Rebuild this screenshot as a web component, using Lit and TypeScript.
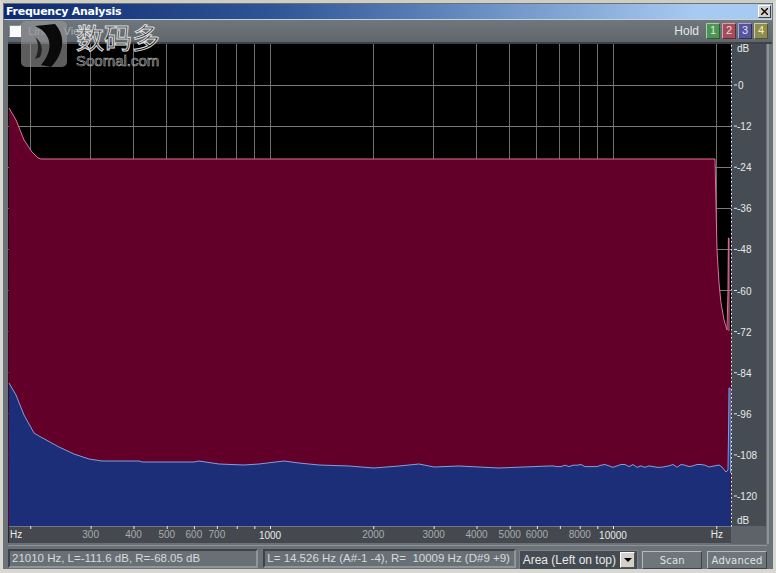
import { LitElement, html, css, svg } from "lit";
import { customElement } from "lit/decorators.js";

const PW = 723;
const PH = 482;
const fx = (f: number) => 262 + 343 * Math.log10(f / 1000);
const dy = (db: number) => 41 - (db * 41.1) / 12;
const majors = [200, 300, 400, 500, 600, 700, 800, 900, 1000, 2000, 3000, 4000, 5000, 6000, 7000, 8000, 9000, 10000, 20000];
const labels: [number, number][] = [300, 400, 500, 600, 700, 2000, 3000, 4000, 5000, 6000, 8000].map((f) => [f, fx(f)]);
const dbs = [0, -12, -24, -36, -48, -60, -72, -84, -96, -108, -120];

const red: [number, number][] = [
  [0, 526], [1, 108], [8, 120], [16, 140], [24, 152], [30, 158], [33, 159], [707, 159], [708, 205], [709, 250], [711, 283], [713, 303], [716, 320], [719, 330],
  [720, 290], [720.4, 238], [721, 238], [721, 331], [723, 331], [723, 526],
].map(([x, y]) => [x, y - 44]);

const bluePts: [number, number][] = [
  [1, 383], [8, 395], [16, 415], [26, 433], [31, 436], [51, 447], [66, 454], [81, 459], [94, 461], [131, 461], [134, 462], [186, 462], [191, 461], [211, 464],
  [236, 465], [251, 464], [276, 461], [291, 463], [311, 465], [341, 466], [366, 468], [391, 466], [411, 464], [426, 467], [451, 466], [491, 468], [541, 466],
];
function blueLine(): [number, number][] {
  const pts = [...bluePts];
  let seed = 7;
  for (let x = 545; x < 700; x += 4) {
    seed = (seed * 73 + 41) % 101;
    pts.push([x, 465.5 + (seed % 5) * 0.7 - 1]);
  }
  pts.push([701, 467], [711, 465], [714, 467], [718, 472], [720, 470], [720.6, 428], [721, 388], [722, 388], [722.5, 473]);
  return pts.map(([x, y]) => [x, y - 44]);
}
const str = (p: [number, number][]) => p.map(([x, y]) => `${x},${y}`).join(" ");

@customElement("app-root")
export class AppRoot extends LitElement {
  static styles = css`
    :host { display: block; width: 776px; height: 573px; font-family: "Liberation Sans", Arial, sans-serif; }
    .frame {
      position: relative; box-sizing: border-box; width: 776px; height: 573px; overflow: hidden;
      background: #6a7277; padding: 3px 4px 5px 4px; display: flex; flex-direction: column;
      border: solid #d9d8d0; border-width: 3px 3px 4px 3px; border-top-color: #cfcec4;
      padding: 1px 1px 1px 1px;
    }
    .title {
      height: 15px; flex: none; display: flex; align-items: center; justify-content: space-between; padding: 0 1px 0 2px;
      background: linear-gradient(90deg, #0d2a70, #2f5596 35%, #a6caf0 90%);
      border-bottom: 1px solid #c7d3dc;
      color: #fff; font: bold 11px "DejaVu Sans", sans-serif; letter-spacing: -0.25px;
    }
    .close {
      width: 11px; height: 11px; background: #d4d0c8; border: 1px solid; border-color: #fff #404040 #404040 #fff; margin-right: 0;
      display: grid; place-items: center;
    }
    .close svg { display: block; }
    .body { flex: 1; display: flex; flex-direction: column; background: #6a7277; padding-left: 4px; }
    .tools {
      height: 24px; flex: none; display: flex; align-items: center; justify-content: space-between;
      padding: 0 4px 1px 1px; box-sizing: border-box;
      background: linear-gradient(#6f777c, #5f666c); border-bottom: 2px solid #3e4246;
      font-size: 11.5px; color: #aab0b4;
    }
    .check { display: flex; align-items: center; gap: 7px; }
    .box { width: 10px; height: 10px; background: #fbfbfb; border: 1px solid; border-color: #8a8f92 #fff #fff #8a8f92; }
    .hold { display: flex; align-items: center; gap: 2px; color: #e4e6e6; font-size: 12px; }
    .hold span { margin-right: 5px; }
    .hb {
      width: 12px; height: 14px; border: 1px solid; font-size: 11px; display: grid; place-items: center; color: #eef; line-height: 1;
    }
    .g { background: #4d9455; border-color: #a4cfa4 #2c5c32 #2c5c32 #a4cfa4; color: #d4f4c4; }
    .r { background: #a04f5b; border-color: #dca0a6 #602a32 #602a32 #dca0a6; color: #f0d8d8; }
    .b { background: #55559c; border-color: #a8a8d8 #2f2f60 #2f2f60 #a8a8d8; color: #e0e0ff; }
    .y { background: #8d8d52; border-color: #d0d0a0 #55552c #55552c #d0d0a0; color: #f4f0b0; }
    .main { display: flex; flex: none; height: 482px; }
    .plot { display: block; flex: none; background: #000; }
    .dbaxis { display: block; flex: none; background: #454c54; }
    .rail { width: 2px; margin-left: 1px; background: #8d9397; flex: none; height: 500px; }
    .hz { display: block; flex: none; }
    .hz-row { display: flex; flex: none; height: 17px; }
    .axt { font: 10px "Liberation Sans", sans-serif; fill: #e8eaea; }
    .dim { fill: #a8acac; }
    .status {
      flex: none; display: flex; align-items: flex-start; height: 22px; margin-top: 1px; border-top: 1px solid #8d9397; margin-right: 5px; padding-top: 3px; gap: 5px;
      font-size: 11.5px; color: #d6dadc;
    }
    .cell {
      box-sizing: border-box; height: 19px; border: 2px solid; border-color: #3c4248 #8f9599 #8f9599 #3c4248;
      padding: 0 2px 0 2px; line-height: 15px; white-space: pre; background: #687076; overflow: hidden;
    }
    .c1 { width: 251px; }
    .c2 { width: 253px; }
    .combo {
      box-sizing: border-box; width: 120px; height: 20px; margin-left: -2px; margin-top: 1px; background: #454b52; color: #e8e8e8; border: 1px solid #7c8287;
      display: flex; align-items: center; justify-content: space-between; padding: 0 2px 0 3px; font-size: 12px;
    }
    .arrow {
      width: 15px; height: 16px; box-sizing: border-box; background: #d4d0c8; border: 1px solid; border-color: #fff #555 #555 #fff; display: grid; place-items: center;
    }
    .arrow i { width: 0; height: 0; border: 4px solid transparent; border-top: 4px solid #000; border-bottom: 0; }
    .btn {
      box-sizing: border-box; width: 60px; height: 18px; margin-top: 2px; border: 1px solid; border-color: #b5babd #3d4348 #3d4348 #b5babd; background: #6e767b;
      color: #dfe2e2; font: 10px "DejaVu Sans", sans-serif; display: grid; place-items: center; letter-spacing: 0.2px;
    }
    .btn.first { margin-left: -1px; margin-right: 0; }
    .wm { position: absolute; left: 18px; top: 17px; width: 150px; height: 55px; pointer-events: none; }
    .wm .mark { position: absolute; left: 0; top: 1px; width: 46px; height: 46px; border-radius: 5px; background: rgba(150,150,150,0.62); overflow: hidden; }
    .wm .cn { position: absolute; left: 55px; top: 0; font: 28px/34px "Noto Sans CJK SC", sans-serif; color: rgba(20,20,20,0.75); -webkit-text-stroke: 1px #e0e0e0; letter-spacing: 0; white-space: nowrap; }
    .wm .en { position: absolute; left: 55px; top: 32px; font: 15px/18px "Liberation Sans", sans-serif; color: rgba(15,15,15,0.4); -webkit-text-stroke: 0.6px #b8b8b8; white-space: nowrap; }
    .wm svg { display: block; }
  `;

  plot() {
    const blue = blueLine();
    return svg`<svg class="plot" width=${PW} height=${PH} viewBox="0 0 ${PW} ${PH}">
      ${majors.map((f) => svg`<line x1=${fx(f)} x2=${fx(f)} y1="0" y2=${PH} stroke="#6d6d6d" stroke-width="1" shape-rendering="crispEdges"></line>`)}
      ${dbs.map((d) => svg`<line x1="0" x2=${PW} y1=${dy(d)} y2=${dy(d)} stroke="#7a7a7a" stroke-width="1" shape-rendering="crispEdges"></line>`)}
      <polygon points=${str(red)} fill="#630029"></polygon>
      <polyline points=${str(red.slice(1, -2))} fill="none" stroke="#e0709a" stroke-width="1"></polyline>
      <polygon points=${`1,${PH} ${str(blue)} 723,${PH}`} fill="#1d2e78"></polygon>
      <polyline points=${str(blue)} fill="none" stroke="#7f9fe0" stroke-width="1"></polyline>
    </svg>`;
  }

  dbAxis() {
    const dots = [];
    for (let y = 1; y < 482; y += 4) dots.push(y);
    return svg`<svg class="dbaxis" width="35" height="500" viewBox="0 0 35 500">
      <rect x="0" y="482" width="35" height="18" fill="#5d6369"></rect>
      ${dots.map((y) => svg`<rect x="0" y=${y} width="1" height="1.5" fill="#f4f4f4"></rect>`)}
      ${dbs.map((d) => svg`<rect x="3" y=${dy(d) - 0.5} width="3" height="1" fill="#e8e8e8"></rect>
        <text class="axt" x=${d === 0 ? 7 : 6} y=${dy(d) + 4}>${d}</text>`)}
      <text class="axt" x="6" y="8">dB</text>
      <text class="axt" x="6" y="480">dB</text>
    </svg>`;
  }

  hzAxis() {
    return svg`<svg class="hz" width="723" height="17" viewBox="0 0 723 17">
      <rect width="723" height="17" fill="#45494f"></rect>
      <rect width="723" height="1" fill="#71777c"></rect>
      <rect width="1" height="17" fill="#23262a"></rect>
      ${majors.map((f) => svg`<rect x=${fx(f)} y="0" width="1" height="3" fill="#e8e8e8"></rect>`)}
      <text class="axt" x="2" y="12">Hz</text>
      ${labels.map(([, x]) => svg`<text class="axt dim" x=${x} y="12" text-anchor="middle">${Math.round(10 ** ((x - 262) / 343 + 3) / 100) * 100}</text>`)}
      <text class="axt" x=${fx(1000)} y="13" text-anchor="middle">1000</text>
      <text class="axt" x=${fx(10000)} y="13" text-anchor="middle">10000</text>
      <text class="axt" x="715" y="12" text-anchor="end">Hz</text>
    </svg>`;
  }

  render() {
    return html`<div class="frame">
      <div class="title">
        <span>Frequency Analysis</span>
        <div class="close"><svg width="7" height="7" viewBox="0 0 7 7"><path d="M0 0L7 7M7 0L0 7" stroke="#000" stroke-width="1.3"></path></svg></div>
      </div>
      <div class="body">
        <div class="tools">
          <div class="check"><div class="box"></div><span>Linear View</span></div>
          <div class="hold"><span>Hold</span><div class="hb g">1</div><div class="hb r">2</div><div class="hb b">3</div><div class="hb y">4</div></div>
        </div>
        <div style="display:flex;flex:none">
          <div>
            <div class="main">${this.plot()}</div>
            <div class="hz-row">${this.hzAxis()}</div>
          </div>
          ${this.dbAxis()}
          <div class="rail"></div>
        </div>
        <div class="status">
          <div class="cell c1">21010 Hz, L=-111.6 dB, R=-68.05 dB</div>
          <div class="cell c2">L= 14.526 Hz (A#-1 -4), R=  10009 Hz (D#9 +9)</div>
          <div class="combo"><span>Area (Left on top)</span><div class="arrow"><i></i></div></div>
          <div class="btn first">Scan</div>
          <div class="btn">Advanced</div>
        </div>
      </div>
      <div class="wm">
        <div class="mark"><svg width="46" height="46" viewBox="0 0 46 46"><path d="M14 5C30 12 34 28 20 44L30 46C42 34 46 16 34 3Z" fill="#0a0a0a"></path><path d="M14 16C20 20 23 28 19 36L14 38C18 30 18 22 14 16Z" fill="#222"></path></svg></div>
        <div class="cn">数码多</div>
        <div class="en">Soomal.com</div>
      </div>
    </div>`;
  }
}
